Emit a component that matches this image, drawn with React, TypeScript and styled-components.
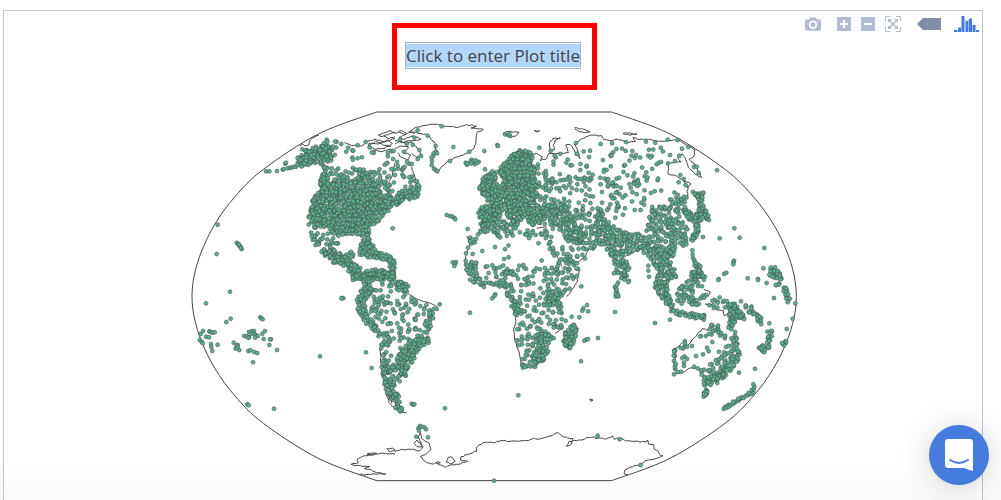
import React from "react";
import styled, { createGlobalStyle } from "styled-components";

type Pair = [number, number];
/** step is the mean distance between two stations inside the outline */
type Area = { step: number; outline: number[] };
type Sheet = { x: number; y: number; areas: Area[]; dots: number[]; coasts: number[][] };

const SHEETS: Sheet[] = [
  {
    // North America, west
    x: 0, y: 0,
    areas: [
      { step: 7, outline: [335, 175, 350, 158, 380, 140, 410, 132, 445, 142, 440, 185, 400, 188, 370, 195, 350, 202, 337, 195] },
      { step: 13, outline: [400, 122, 460, 114, 480, 130, 450, 150, 458, 180, 440, 195, 440, 150, 405, 136] },
      { step: 7, outline: [405, 190, 425, 190, 432, 220, 428, 270, 405, 276, 402, 235, 412, 215] },
      { step: 15, outline: [455, 140, 510, 132, 500, 165, 540, 170, 540, 185, 510, 190, 520, 210, 500, 225, 430, 225, 425, 190, 470, 205, 495, 185] },
      { step: 17, outline: [545, 125, 580, 150, 630, 145, 630, 280, 610, 265, 600, 230, 575, 200, 590, 180, 630, 180, 560, 160] },
      { step: 11, outline: [500, 205, 570, 205, 600, 240, 625, 275, 600, 270, 570, 240, 520, 230] },
      { step: 7, outline: [415, 265, 440, 245, 470, 222, 505, 240, 540, 220, 575, 245, 595, 280, 630, 286, 630, 318, 600, 340, 580, 365, 552, 385, 552, 404, 530, 408, 490, 400, 465, 412, 440, 400, 425, 386, 395, 388, 370, 375, 370, 345, 378, 310, 390, 285] },
      { step: 9, outline: [375, 395, 395, 390, 408, 420, 400, 442, 388, 440] },
      { step: 12, outline: [410, 390, 440, 400, 462, 425, 458, 455, 425, 450, 405, 420] },
      { step: 7, outline: [407, 440, 440, 445, 460, 458, 480, 468, 485, 458, 505, 450, 506, 466, 495, 480, 528, 505, 520, 535, 500, 530, 470, 495, 440, 487, 410, 465] },
      { step: 7, outline: [528, 400, 550, 400, 555, 425, 580, 455, 630, 470, 630, 540, 612, 540, 614, 488, 590, 478, 560, 475, 525, 467, 520, 438, 532, 425] },
      { step: 6, outline: [500, 540, 500, 524, 530, 515, 575, 505, 630, 515, 630, 540] },
    ],
    dots: [98, 374, 95, 462, 155, 428, 160, 432, 163, 437, 167, 441, 170, 447, 162, 434, 168, 444, 301, 191, 303, 188, 623, 385, 243, 214, 253, 214, 276, 213, 293, 209, 296, 207, 308, 205, 315, 203, 320, 203, 326, 200, 333, 200, 338, 195, 352, 148, 518, 136, 542, 126, 505, 152],
    coasts: [
      [345, 138, 353, 132, 360, 138, 372, 134, 376, 120, 388, 112, 402, 106],
      [478, 128, 500, 137, 530, 138, 548, 124, 570, 118, 600, 124, 630, 116],
      [580, 105, 600, 98, 618, 92, 630, 98, 605, 104, 588, 110, 580, 105],
      [552, 130, 580, 132, 610, 120, 622, 130, 600, 145, 570, 148, 550, 140, 552, 130],
      [560, 150, 590, 155, 618, 148, 626, 160],
      [548, 138, 572, 124, 596, 136, 618, 140],
      [596, 108, 612, 116, 630, 110],
      [585, 220, 595, 250, 610, 265, 612, 245, 622, 225, 628, 190],
    ],
  },
  {
    // Greenland, Europe, North Africa
    x: 630, y: 0,
    areas: [
      { step: 13, outline: [0, 180, 50, 186, 45, 220, 62, 235, 75, 265, 30, 262, 30, 240, 22, 225, 0, 215] },
      { step: 7, outline: [0, 278, 45, 265, 75, 265, 72, 294, 30, 300, 0, 318] },
      { step: 9, outline: [55, 235, 68, 240, 76, 268, 58, 268] },
      { step: 8, outline: [207, 182, 235, 175, 252, 185, 240, 195, 215, 202] },
      { step: 7, outline: [345, 165, 375, 148, 400, 148, 415, 170, 412, 190, 425, 215, 420, 240, 430, 260, 420, 290, 425, 310, 442, 330, 436, 374, 410, 374, 385, 352, 365, 372, 345, 365, 328, 330, 314, 340, 318, 355, 290, 378, 260, 385, 250, 370, 250, 325, 285, 312, 268, 290, 250, 268, 262, 232, 290, 208, 310, 215, 302, 235, 308, 258, 326, 252, 312, 215, 320, 195, 340, 180] },
      { step: 9, outline: [265, 370, 320, 358, 375, 372, 360, 390, 345, 430, 330, 395, 300, 420, 290, 390, 245, 408] },
      { step: 10, outline: [205, 408, 245, 408, 243, 430, 225, 432, 218, 416] },
      { step: 8, outline: [425, 330, 490, 310, 520, 325, 545, 370, 575, 415, 575, 440, 520, 425, 480, 375, 430, 372] },
      { step: 12, outline: [415, 255, 450, 228, 475, 235, 470, 270, 490, 320, 440, 335, 420, 300] },
      { step: 22, outline: [410, 180, 450, 175, 520, 150, 600, 150, 600, 330, 560, 330, 500, 300, 440, 250, 425, 205] },
      { step: 18, outline: [440, 215, 520, 225, 600, 220, 600, 270, 500, 270] },
      { step: 13, outline: [480, 300, 530, 290, 530, 330, 600, 325, 600, 440, 560, 440, 520, 340] },
      { step: 12, outline: [440, 380, 475, 375, 470, 430, 490, 450, 525, 480, 550, 490, 550, 540, 475, 540, 465, 500, 490, 490, 460, 440] },
      { step: 14, outline: [490, 430, 600, 440, 580, 470, 545, 500, 520, 480, 485, 450] },
      { step: 11, outline: [370, 385, 400, 382, 450, 395, 450, 405, 400, 415, 375, 408] },
      { step: 38, outline: [230, 410, 440, 410, 450, 490, 240, 480] },
      { step: 16, outline: [240, 485, 330, 490, 470, 500, 480, 540, 240, 540] },
      { step: 8, outline: [205, 482, 245, 485, 255, 540, 225, 540] },
      { step: 9, outline: [310, 505, 370, 508, 370, 525, 315, 525] },
    ],
    dots: [15, 119, 68, 91, 58, 113, 35, 131, 53, 134, 73, 150, 27, 155, 78, 168, 68, 177, 50, 192, 140, 79, 98, 107, 122, 138, 123, 155, 126, 160, 116, 160, 115, 168, 110, 172, 111, 183, 110, 195, 117, 206, 123, 211, 127, 214, 175, 141, 165, 183, 223, 155, 268, 153, 307, 135, 309, 138, 330, 103, 340, 105, 345, 108, 343, 102, 433, 143, 270, 208, 155, 345, 165, 348, 172, 350, 178, 354, 181, 358, 218, 387, 173, 487, 183, 486, 180, 492, 178, 498, 219, 443, 213, 460, 233, 462, 543, 129, 467, 153, 585, 152],
    coasts: [
      [100, 106, 78, 100, 42, 96, 62, 82, 120, 73, 165, 80, 190, 82, 215, 74, 244, 78, 228, 84, 265, 88, 246, 98, 243, 125, 234, 148, 215, 160, 190, 170, 160, 182, 142, 198, 128, 218, 110, 200, 110, 175, 125, 155, 120, 130, 100, 106],
      [0, 100, 20, 92, 34, 100, 12, 112, 30, 118, 55, 108, 78, 118, 50, 122, 20, 128, 0, 122],
      [0, 145, 18, 138, 40, 140, 30, 160, 48, 165, 38, 180, 15, 170, 8, 158],
      [10, 96, 30, 104, 48, 96, 60, 100],
      [0, 132, 16, 124, 34, 132, 48, 126],
      [45, 122, 62, 138, 78, 162, 66, 172, 50, 160],
      [50, 200, 58, 225, 62, 240],
      [325, 100, 340, 94, 372, 97, 362, 108, 348, 112, 338, 104],
      [418, 91, 425, 94, 434, 92, 425, 96, 418, 91],
      [466, 150, 463, 132, 474, 116, 496, 114, 480, 122, 474, 136, 478, 150, 466, 150],
      [410, 160, 430, 163, 442, 170, 436, 182, 452, 178, 462, 160, 490, 160, 520, 158, 512, 135, 526, 134, 538, 150, 555, 176, 548, 150, 540, 134, 556, 118, 580, 108, 600, 104],
      [538, 84, 560, 86, 585, 96, 568, 98, 540, 88],
      [215, 408, 225, 430, 212, 470, 210, 490],
      [464, 435, 480, 455, 492, 480, 500, 500],
      [585, 440, 570, 470, 545, 490],
      [555, 510, 545, 540],
      [425, 385, 455, 382],
    ],
  },
  {
    // Siberia, East Asia
    x: 1230, y: 0,
    areas: [
      { step: 22, outline: [0, 170, 70, 140, 140, 130, 200, 125, 215, 165, 200, 210, 190, 240, 220, 260, 250, 275, 200, 300, 150, 325, 100, 325, 60, 340, 20, 340, 0, 320] },
      { step: 15, outline: [20, 230, 60, 230, 90, 300, 80, 325, 20, 325, 50, 280] },
      { step: 12, outline: [105, 230, 145, 245, 130, 260, 105, 260] },
      { step: 8, outline: [0, 318, 20, 330, 40, 365, 65, 385, 110, 400, 140, 400, 160, 420, 200, 440, 240, 440, 240, 465, 225, 480, 245, 520, 240, 540, 185, 540, 180, 510, 150, 460, 120, 450, 85, 470, 105, 500, 95, 540, 75, 540, 55, 490, 30, 440, 0, 430] },
      { step: 10, outline: [150, 380, 170, 320, 200, 320, 240, 280, 275, 290, 275, 320, 250, 335, 265, 370, 280, 385, 275, 410, 290, 430, 240, 445, 160, 425] },
      { step: 6, outline: [286, 262, 300, 275, 326, 278, 320, 310, 335, 330, 344, 360, 310, 365, 312, 395, 295, 425, 275, 420, 300, 395, 298, 370, 272, 352, 258, 332, 275, 322, 295, 345, 308, 335, 308, 300] },
      { step: 7, outline: [284, 460, 300, 465, 300, 486, 325, 505, 332, 540, 292, 540, 286, 520, 300, 505] },
      { step: 7, outline: [518, 500, 547, 500, 562, 540, 538, 540, 520, 522] },
    ],
    dots: [17, 132, 51, 130, 93, 126, 153, 125, 218, 119, 248, 120, 280, 141, 261, 146, 219, 190, 240, 183, 253, 167, 225, 165, 256, 225, 266, 237, 251, 247, 272, 255, 297, 200, 305, 200, 311, 219, 366, 211, 418, 385, 374, 415, 434, 413, 508, 444, 417, 482, 415, 487, 415, 493, 505, 505, 324, 411, 387, 522, 394, 518, 371, 537, 458, 535, 489, 537, 292, 451, 160, 497, 160, 512, 162, 530, 57, 520, 119, 330, 137, 330, 61, 353, 84, 344],
    coasts: [
      [0, 105, 20, 107, 26, 118, 44, 122, 66, 117, 78, 120, 100, 128, 122, 124, 114, 112, 128, 118, 160, 118, 190, 124, 220, 122, 252, 119],
      [84, 100, 104, 99, 126, 102, 105, 106, 84, 100],
      [252, 119, 272, 134, 300, 150, 296, 170, 282, 178, 298, 190, 320, 232, 300, 222, 280, 202, 272, 178, 262, 162, 248, 172, 258, 186, 236, 188, 220, 192, 220, 222, 242, 226, 262, 238, 288, 252, 280, 262, 266, 252],
      [266, 240, 278, 262, 278, 290, 268, 300],
      [90, 470, 110, 460, 130, 448],
    ],
  },
  {
    // Pacific, South America's west coast
    x: 0, y: 540,
    areas: [
      { step: 7, outline: [530, 0, 560, 0, 560, 30, 545, 55, 540, 85, 552, 110, 578, 135, 585, 155, 560, 150, 540, 130, 516, 85, 514, 55, 530, 25] },
      { step: 11, outline: [575, 150, 610, 150, 618, 165, 605, 200, 605, 240, 622, 280, 628, 385, 612, 360, 600, 320, 590, 280, 586, 200] },
      { step: 9, outline: [590, 250, 630, 255, 630, 385, 618, 350, 598, 310] },
      { step: 16, outline: [555, 10, 630, 0, 630, 280, 610, 240, 605, 160, 555, 110, 545, 60] },
      { step: 11, outline: [560, 60, 600, 45, 600, 75, 575, 80] },
    ],
    dots: [135, 35, 63, 70, 137, 116, 124, 126, 472, 54, 475, 55, 469, 55, 405, 229, 543, 217, 560, 264, 204, 247, 187, 373, 191, 376, 267, 386, 276, 210, 253, 195, 258, 178, 255, 178, 236, 177, 240, 153, 232, 161, 226, 112, 229, 115, 233, 118, 146, 188, 158, 195, 155, 197, 152, 206, 163, 210, 158, 202, 190, 213, 196, 211, 207, 216, 217, 219, 192, 156, 200, 154, 207, 153, 205, 160, 198, 162, 212, 165, 218, 168, 178, 168, 185, 169, 192, 172, 190, 174, 210, 173, 54, 153, 47, 162, 73, 154, 77, 156, 83, 158, 89, 157, 63, 170, 72, 172, 44, 180, 50, 185, 53, 190, 78, 192, 79, 201, 82, 213, 98, 194],
    coasts: [
      [585, 190, 588, 250, 598, 300, 604, 345, 616, 372, 630, 390],
      [600, 310, 608, 345, 620, 370],
      [523, 584, 560, 583, 602, 582, 575, 578, 552, 568, 538, 566, 554, 560, 498, 553, 520, 548, 516, 538, 535, 528, 585, 520, 630, 522],
      [546, 522, 575, 520, 560, 525, 546, 522],
      [606, 506, 622, 504, 630, 512, 612, 514, 606, 506],
    ],
  },
  {
    // Brazil, Africa
    x: 630, y: 540,
    areas: [
      { step: 6, outline: [0, 0, 25, 5, 42, 20, 35, 35, 0, 30] },
      { step: 15, outline: [0, 30, 42, 35, 50, 55, 100, 70, 125, 85, 125, 105, 105, 140, 105, 190, 75, 200, 60, 240, 35, 280, 0, 290] },
      { step: 10, outline: [100, 78, 127, 85, 120, 110, 105, 150, 105, 190, 95, 190, 95, 110] },
      { step: 8, outline: [50, 172, 102, 168, 98, 195, 72, 200, 68, 228, 40, 260, 35, 292, 0, 290, 0, 255, 15, 215, 40, 190] },
      { step: 8, outline: [0, 290, 15, 300, 14, 322, 0, 322] },
      { step: 7, outline: [0, 335, 16, 345, 15, 375, 35, 392, 22, 399, 0, 385] },
      { step: 8, outline: [225, 0, 245, 0, 270, 8, 320, 0, 350, 0, 360, 25, 335, 45, 322, 20, 290, 20, 255, 22, 238, 12] },
      { step: 15, outline: [350, 0, 540, 0, 520, 50, 500, 80, 500, 140, 480, 165, 465, 200, 450, 235, 425, 260, 380, 262, 372, 220, 362, 180, 362, 130, 345, 70, 340, 40, 360, 25] },
      { step: 7, outline: [415, 215, 432, 192, 460, 200, 452, 235, 425, 258, 412, 245] },
      { step: 7, outline: [380, 252, 425, 252, 420, 264, 380, 264] },
      { step: 8, outline: [450, 30, 505, 35, 500, 75, 500, 145, 488, 145, 490, 80, 455, 65] },
      { step: 9, outline: [400, 155, 470, 165, 465, 200, 425, 190, 395, 170] },
      { step: 7, outline: [330, 42, 355, 50, 376, 100, 362, 112, 348, 75] },
      { step: 7, outline: [510, 155, 545, 122, 552, 145, 535, 190, 525, 210, 505, 200, 503, 178] },
    ],
    dots: [134, 73, 225, 98, 50, 371, 55, 374, 58, 373, 150, 385, 370, 346, 64, 470, 99, 472, 297, 602, 301, 43, 298, 48, 292, 55, 559, 19, 576, 75, 565, 85, 579, 94, 562, 92, 573, 179, 579, 177, 568, 182, 609, 174, 558, 244, 530, 110, 553, 112, 512, 122, 70, 445, 75, 438, 80, 440, 88, 442, 93, 448, 72, 452],
    coasts: [
      [40, 40, 60, 55, 100, 68, 126, 80],
      [362, 100, 362, 130, 356, 150, 360, 180, 372, 215, 380, 260],
      [548, 0, 535, 25, 515, 50],
      [500, 145, 480, 160],
      [0, 385, 12, 394, 34, 398],
      [584, 357, 594, 360, 588, 364, 584, 357],
      [0, 515, 20, 508, 50, 508, 74, 512, 84, 502, 66, 500, 58, 490, 66, 480, 82, 500, 70, 470, 76, 458, 80, 475, 104, 492, 108, 508, 92, 524, 76, 530, 90, 544, 115, 552, 136, 548, 124, 546, 130, 554, 152, 562, 170, 554, 190, 553, 218, 544, 196, 540, 198, 530, 245, 514, 246, 500, 265, 488, 300, 488, 325, 482, 345, 484, 400, 482, 418, 474, 430, 478, 465, 468, 490, 458, 505, 470, 534, 476, 530, 492, 514, 499, 522, 484, 560, 480, 580, 472, 602, 471],
      [154, 546, 160, 532, 172, 532, 180, 544, 166, 552, 154, 546],
    ],
  },
  {
    // South-east Asia, Oceania
    x: 1230, y: 540,
    areas: [
      { step: 7, outline: [58, 0, 70, 0, 72, 50, 60, 55, 56, 25] },
      { step: 6, outline: [94, 0, 110, 0, 108, 12, 98, 14] },
      { step: 7, outline: [172, 8, 188, 0, 218, 0, 222, 40, 234, 70, 236, 88, 280, 98, 330, 100, 328, 120, 260, 108, 225, 95, 222, 75, 205, 70, 190, 40] },
      { step: 9, outline: [245, 40, 262, 12, 280, 0, 330, 0, 322, 20, 300, 18, 295, 45, 318, 80, 300, 80, 285, 70, 240, 72] },
      { step: 10, outline: [290, 60, 320, 38, 342, 35, 340, 50, 310, 58] },
      { step: 11, outline: [335, 70, 360, 52, 385, 52, 400, 66, 400, 90, 365, 90, 345, 78] },
      { step: 6, outline: [395, 66, 420, 66, 440, 98, 460, 128, 425, 112, 412, 150, 400, 150, 402, 95] },
      { step: 9, outline: [445, 95, 445, 75, 465, 68, 482, 92, 500, 108, 512, 132, 490, 138, 470, 105, 455, 90] },
      { step: 7, outline: [516, 150, 532, 148, 528, 205, 515, 208, 505, 222, 488, 200, 495, 193, 516, 200] },
      { step: 7, outline: [560, 182, 580, 176, 577, 198, 562, 197] },
      { step: 7, outline: [560, 18, 572, 20, 588, 66, 574, 68] },
      { step: 7, outline: [538, 0, 562, 0, 552, 16, 540, 16] },
      { step: 10, outline: [298, 165, 330, 155, 345, 130, 382, 130, 372, 155, 398, 170, 390, 180, 360, 165, 330, 178, 300, 175] },
      { step: 8, outline: [408, 150, 422, 155, 428, 190, 435, 225, 425, 255, 370, 310, 340, 320, 335, 345, 322, 345, 325, 290, 355, 290, 400, 250, 410, 200] },
      { step: 12, outline: [320, 250, 365, 235, 375, 190, 410, 190, 415, 250, 370, 300, 318, 300] },
      { step: 10, outline: [228, 275, 238, 210, 265, 182, 282, 185, 280, 208, 250, 210, 245, 230, 240, 280] },
      { step: 9, outline: [260, 225, 276, 225, 282, 245, 262, 250] },
    ],
    dots: [60, 96, 180, 129, 225, 119, 370, 0, 489, 0, 515, 9, 537, 54, 601, 70, 593, 116, 575, 147, 432, 278, 480, 266, 438, 64, 8, 467, 74, 478, 137, 555, 523, 130, 303, 228, 324, 223, 341, 214, 336, 203, 352, 186, 291, 198, 308, 265, 297, 260, 318, 271, 258, 275, 248, 276, 237, 283, 267, 258, 326, 350, 332, 344, 386, 387, 391, 380, 395, 383, 400, 374, 401, 380, 407, 376, 413, 372, 419, 368, 424, 364, 431, 362, 436, 356, 440, 352, 446, 354, 452, 347, 458, 346, 464, 343, 470, 341, 474, 335, 470, 330, 476, 328, 478, 320, 475, 313, 461, 339, 430, 356, 414, 365],
    coasts: [
      [280, 195, 300, 172, 322, 146, 338, 152, 352, 130],
      [240, 282, 268, 276, 280, 266, 302, 264, 318, 270],
      [236, 270, 240, 230, 236, 210, 262, 188],
      [322, 335, 340, 338, 335, 350, 322, 348, 322, 335],
      [330, 72, 352, 74, 365, 90, 385, 92, 388, 108, 402, 100],
      [326, 28, 346, 36, 340, 50],
      [0, 476, 35, 476, 53, 468, 58, 478, 80, 475, 92, 483, 120, 484, 155, 486, 158, 480, 160, 492, 176, 494, 178, 508, 190, 514, 194, 524, 204, 528, 180, 536, 150, 542, 137, 555, 105, 562, 90, 570, 88, 582, 98, 584],
    ],
  },
];

/** Left half of the globe's edge, top to bottom */
const EDGE: Pair[] = [
  [575, 36], [400, 102], [235, 208], [150, 290], [90, 372], [50, 453], [28, 525], [21, 589],
  [28, 653], [50, 725], [90, 806], [150, 888], [235, 970], [400, 1075], [575, 1142],
];
const EDGE_SUM = 1855;

function random(seed: number) {
  let s = seed;
  return () => {
    s = (s * 1664525 + 1013904223) % 4294967296;
    return s / 4294967296;
  };
}

function pairs(flat: number[]): Pair[] {
  const out: Pair[] = [];
  for (let i = 0; i < flat.length; i += 2) out.push([flat[i], flat[i + 1]]);
  return out;
}

function inside(x: number, y: number, ring: Pair[]) {
  let hit = false;
  for (let i = 0, j = ring.length - 1; i < ring.length; j = i++) {
    const [xi, yi] = ring[i];
    const [xj, yj] = ring[j];
    if (yi > y !== yj > y && x < ((xj - xi) * (y - yi)) / (yj - yi) + xi) hit = !hit;
  }
  return hit;
}

function scatter(area: Area, next: () => number): Pair[] {
  const ring = pairs(area.outline);
  const xs = ring.map((p) => p[0]);
  const ys = ring.map((p) => p[1]);
  const out: Pair[] = [];
  for (let y = Math.min(...ys); y <= Math.max(...ys); y += area.step) {
    for (let x = Math.min(...xs); x <= Math.max(...xs); x += area.step) {
      const px = x + (next() * 1.6 - 0.3) * area.step;
      const py = y + (next() * 1.6 - 0.3) * area.step;
      if (inside(px, py, ring)) out.push([px, py]);
    }
  }
  return out;
}

/** Breaks each stretch of a coast into short uneven pieces */
function coastPath(flat: number[], next: () => number) {
  const pts = pairs(flat);
  let d = `M${pts[0][0]} ${pts[0][1]}`;
  for (let i = 1; i < pts.length; i++) {
    const [ax, ay] = pts[i - 1];
    const [bx, by] = pts[i];
    const n = Math.max(1, Math.round(Math.hypot(bx - ax, by - ay) / 7));
    for (let k = 1; k < n; k++) {
      const x = ax + ((bx - ax) * k) / n + (next() - 0.5) * 4;
      const y = ay + ((by - ay) * k) / n + (next() - 0.5) * 4;
      d += `L${x.toFixed(1)} ${y.toFixed(1)}`;
    }
    d += `L${bx} ${by}`;
  }
  return d;
}

function smooth(pts: Pair[]) {
  let d = "";
  for (let i = 0; i < pts.length - 1; i++) {
    const a = pts[Math.max(0, i - 1)];
    const b = pts[i];
    const c = pts[i + 1];
    const e = pts[Math.min(pts.length - 1, i + 2)];
    d += `C${b[0] + (c[0] - a[0]) / 6} ${b[1] + (c[1] - a[1]) / 6} ${c[0] - (e[0] - b[0]) / 6} ${c[1] - (e[1] - b[1]) / 6} ${c[0]} ${c[1]}`;
  }
  return d;
}

const next = random(20177);
const LAYERS = SHEETS.map((sheet) => {
  const dots = sheet.areas.flatMap((a) => scatter(a, next));
  for (let i = dots.length - 1; i > 0; i--) {
    const j = Math.floor(next() * (i + 1));
    [dots[i], dots[j]] = [dots[j], dots[i]];
  }
  return {
    x: sheet.x,
    y: sheet.y,
    dots: dots.concat(pairs(sheet.dots)),
    coasts: sheet.coasts.map((c) => coastPath(c, next)).join(""),
  };
});

const rightEdge = [...EDGE].reverse().map(([x, y]): Pair => [EDGE_SUM - x, y]);
const OUTLINE = `M575 36${smooth(EDGE)}L${EDGE_SUM - 575} 1142${smooth(rightEdge)}Z`;

const GlobalStyle = createGlobalStyle`
  * { box-sizing: border-box; }
  body {
    margin: 0;
    background: #fff;
    font-family: "Open Sans", "Liberation Sans", sans-serif;
    color: #444;
  }
`;

const Page = styled.div`
  display: flex;
  flex-direction: column;
  min-height: 100vh;
  padding: 10px 18px 0 3px;
  background: linear-gradient(to top, #fafafa, #fff 36px);
`;

const PlotFrame = styled.main`
  flex: 1;
  border: 1px solid #bac5d9;
  border-bottom: 0;
`;

const PlotHeader = styled.header`
  display: grid;
  grid-template-columns: 1fr auto 1fr;
  align-items: start;
  padding: 0 3px 0 6px;
`;

const TitleHighlight = styled.div`
  grid-column: 2;
  margin-top: 12px;
  padding: 14px 11px 16px 8px;
  border: 5px solid #f00;
`;

const TitleInput = styled.input`
  display: block;
  width: 176px;
  height: 27px;
  padding: 1px 0;
  border: 1px solid #a2b1c6;
  border-radius: 0;
  outline: 0;
  background: #b2d7ff content-box;
  color: #444;
  font: 17px/23px "Open Sans", "Liberation Sans", sans-serif;
  text-align: center;
`;

const Toolbar = styled.div`
  grid-column: 3;
  justify-self: end;
  display: flex;
  align-items: center;
  padding-top: 5px;
`;

const ToolButton = styled.button<{ $gap?: number; $tone?: string }>`
  display: block;
  margin: 0 0 0 ${(p) => p.$gap ?? 0}px;
  padding: 0;
  border: 0;
  background: none;
  color: ${(p) => p.$tone ?? "#b1bbd1"};
  cursor: pointer;

  svg {
    display: block;
  }
`;

const MapArea = styled.div`
  display: flex;
  justify-content: center;
  padding: 10px 2px 0 6px;
`;

const WorldMap = styled.svg`
  display: block;
  width: 100%;
  max-width: 620px;
  height: auto;
`;

const ChatButton = styled.button`
  position: fixed;
  right: 12px;
  bottom: 15px;
  display: grid;
  place-items: center;
  width: 60px;
  height: 60px;
  padding: 0;
  border: 0;
  border-radius: 50%;
  background: #447bdc;
  box-shadow: 0 1px 6px rgba(0, 0, 0, 0.06), 0 2px 32px rgba(0, 0, 0, 0.16);
  cursor: pointer;
`;

export default function App() {
  return (
    <Page>
      <GlobalStyle />
      <PlotFrame>
        <PlotHeader>
          <TitleHighlight>
            <TitleInput aria-label="Plot title" defaultValue="Click to enter Plot title" />
          </TitleHighlight>
          <Toolbar role="toolbar" aria-label="Plot tools">
            <ToolButton aria-label="Download plot as a png">
              <svg width="16" height="16" viewBox="0 0 16 16" fill="currentColor">
                <path fillRule="evenodd" d="M5 1.5h6l1 2h2.500q1.500 0 1.500 1.500v8q0 1.800-1.800 1.800H1.800Q0 14.800 0 13V5q0-1.500 1.500-1.500H4zM8 4.500a4.200 4.200 0 1 0 0 8.400a4.200 4.200 0 1 0 0-8.400M8 6.200a2.500 2.500 0 1 1 0 5a2.500 2.500 0 1 1 0-5M13.300 5a.7.7 0 1 0 .1 0z" />
              </svg>
            </ToolButton>
            <ToolButton $gap={16} aria-label="Zoom in">
              <svg width="14" height="16" viewBox="0 0 14 16">
                <path d="M0 1h14v14H0z" fill="currentColor" />
                <path d="M7 4v8M3 8h8" stroke="#fff" strokeWidth="2" />
              </svg>
            </ToolButton>
            <ToolButton $gap={10} aria-label="Zoom out">
              <svg width="14" height="16" viewBox="0 0 14 16">
                <path d="M0 1h14v14H0z" fill="currentColor" />
                <path d="M3 8h8" stroke="#fff" strokeWidth="2" />
              </svg>
            </ToolButton>
            <ToolButton $gap={10} aria-label="Reset view">
              <svg width="16" height="16" viewBox="0 0 16 16" fill="none" stroke="currentColor">
                <path d="M.5 5V.5H5M11 .5h4.500V5M15.500 11v4.500H11M5 15.500H.5V11" />
                <path d="M5 5l6 6M11 5l-6 6" strokeWidth="1.500" />
                <path d="M3 3h4L3 7zM13 3v4L9 3zM13 13H9l4-4zM3 13V9l4 4z" fill="currentColor" stroke="none" />
              </svg>
            </ToolButton>
            <ToolButton $gap={16} $tone="#828da6" aria-label="Show closest data on hover">
              <svg width="24" height="16" viewBox="0 0 24 16">
                <path d="M0 8l6-6h18v12H6z" fill="currentColor" />
              </svg>
            </ToolButton>
            <ToolButton $gap={13} $tone="#447adb" aria-label="Produced with Plotly">
              <svg width="25" height="16" viewBox="0 0 25 16" fill="currentColor">
                <path d="M0 14h3v2H0zM4 12h3v4H4zM8 0h2v16H8zM12 5h2v11h-2zM15 3h3v13h-3zM19 9h2v7h-2zM22 14h3v2h-3z" />
                <path d="M3 14h1v2H3zM4 11h3v1H4zM7 0h1v16H7zM10 0h1v16h-1zM11 4h1v12h-1zM14 4h1v12h-1zM15 2h3v1h-3zM18 9h1v7h-1zM21 9h1v7h-1z" opacity=".5" />
              </svg>
            </ToolButton>
          </Toolbar>
        </PlotHeader>
        <MapArea>
          <WorldMap viewBox="0 0 1860 1170" role="img" aria-label="World map of station locations">
            <path d={OUTLINE} fill="#fff" stroke="#444" strokeWidth="3" />
            {LAYERS.map((layer) => (
              <g key={`c${layer.x}-${layer.y}`} transform={`translate(${layer.x} ${layer.y})`}>
                <path d={layer.coasts} fill="none" stroke="#444" strokeWidth="3" strokeLinejoin="round" />
              </g>
            ))}
            {LAYERS.map((layer) => (
              <g
                key={`d${layer.x}-${layer.y}`}
                transform={`translate(${layer.x} ${layer.y})`}
                fill="#5ab08f"
                stroke="#444"
                strokeOpacity=".75"
                strokeWidth="2"
              >
                {layer.dots.map(([x, y], i) => (
                  <circle key={i} cx={x.toFixed(1)} cy={y.toFixed(1)} r="6" />
                ))}
              </g>
            ))}
          </WorldMap>
        </MapArea>
      </PlotFrame>
      <ChatButton aria-label="Open chat">
        <svg width="28" height="34" viewBox="0 0 28 34">
          <path d="M3 1h22q3 0 3 3v29q-4-1-9-3H3q-3 0-3-3V4q0-3 3-3z" fill="#fff" />
          <path d="M5 22q9 6 18 0" fill="none" stroke="#447bdc" strokeWidth="2" strokeLinecap="round" />
        </svg>
      </ChatButton>
    </Page>
  );
}
